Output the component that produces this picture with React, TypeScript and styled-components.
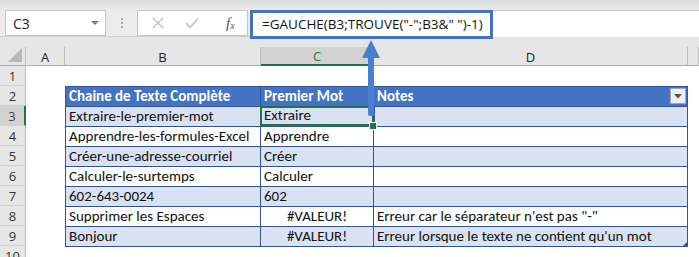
import React from 'react';
import styled, { createGlobalStyle } from 'styled-components';

const GlobalStyle = createGlobalStyle`
  html, body { margin: 0; padding: 0; background: #fff; }
  body { width: 699px; height: 257px; overflow: hidden; font-family: "Open Sans", "Noto Sans", sans-serif; }
`;

const columns = [
  { key: 'A', width: 39 },
  { key: 'B', width: 196 },
  { key: 'C', width: 113, selected: true },
  { key: 'D', width: 314 },
  { key: 'E', width: 11 },
];

const rows = [
  { b: 'Extraire-le-premier-mot', c: 'Extraire', d: '' },
  { b: 'Apprendre-les-formules-Excel', c: 'Apprendre', d: '' },
  { b: 'Créer-une-adresse-courriel', c: 'Créer', d: '' },
  { b: 'Calculer-le-surtemps', c: 'Calculer', d: '' },
  { b: '602-643-0024', c: '602', d: '' },
  { b: 'Supprimer les Espaces', c: '#VALEUR!', d: 'Erreur car le séparateur n\'est pas "-"', err: true },
  { b: 'Bonjour', c: '#VALEUR!', d: "Erreur lorsque le texte ne contient qu'un mot", err: true },
];

const App: React.FC = () => {
  return (
    <Page>
      <GlobalStyle />
      <TopBand>
        <FormulaRow>
          <NameBox>
            C3
            <Caret />
          </NameBox>
          <Grip>
            <i />
            <i />
            <i />
          </Grip>
          <FxBox>
            <FxIcon>
              <svg width="12" height="12" viewBox="0 0 12 12">
                <path d="M1 1 L11 11 M11 1 L1 11" stroke="#c4c4c4" strokeWidth="1.5" fill="none" />
              </svg>
            </FxIcon>
            <FxIcon>
              <svg width="14" height="12" viewBox="0 0 14 12">
                <path d="M1 6 L5 10.5 L13 1.5" stroke="#c4c4c4" strokeWidth="1.8" fill="none" />
              </svg>
            </FxIcon>
            <FxLabel>
              f<sub>x</sub>
            </FxLabel>
          </FxBox>
          <FormulaInput>
            <FormulaHighlight>=GAUCHE(B3;TROUVE("-";B3&amp;" ")-1)</FormulaHighlight>
          </FormulaInput>
        </FormulaRow>
      </TopBand>
      <HeaderGap />
      <Sheet>
        <Corner>
          <svg width="14" height="14" viewBox="0 0 14 14">
            <path d="M14 0 L14 14 L0 14 Z" fill="#b9b9b9" />
          </svg>
        </Corner>
        {columns.map((c) => (
          <ColHead key={c.key} $w={c.width} $sel={!!c.selected}>
            {c.key === 'E' ? '' : c.key}
          </ColHead>
        ))}
        {Array.from({ length: 10 }).map((_, i) => (
          <RowHead key={i} $row={i + 2} $sel={i === 2}>
            {i + 1}
          </RowHead>
        ))}
        <Table>
          <HeadCell>Chaine de Texte Complète</HeadCell>
          <HeadCell>Premier Mot</HeadCell>
          <HeadCell>
            Notes
            <FilterBtn>
              <svg width="8" height="5" viewBox="0 0 8 5">
                <path d="M0 0 L8 0 L4 4.5 Z" fill="#555" />
              </svg>
            </FilterBtn>
          </HeadCell>
          {rows.map((r, i) => (
            <React.Fragment key={i}>
              <Cell $band={i % 2 === 0}>{r.b}</Cell>
              <Cell $band={i % 2 === 0} $center={!!r.err} $active={i === 0}>
                {r.c}
                {i === 0 && <FillHandle />}
              </Cell>
              <Cell $band={i % 2 === 0}>
                {r.d}
                {i === rows.length - 1 && <ResizeMark />}
              </Cell>
            </React.Fragment>
          ))}
        </Table>
      </Sheet>
      <Arrow width="20" height="80" viewBox="0 0 20 80">
        <path d="M9 0 L18 18 L12 18 L12 74 Q12 76 10 76 L8 76 Q6 76 6 74 L6 18 L0 18 Z" fill="#4a7ed2" />
      </Arrow>
    </Page>
  );
};

//styles
const Page = styled.div`
  position: relative;
  width: 699px;
  height: 257px;
  overflow: hidden;
  background: #fff;
`;

const TopBand = styled.div`
  height: 37px;
  background: linear-gradient(#d8d8d8 0px, #e6e6e6 6px, #ececec 10px, #ececec 100%);
  box-sizing: border-box;
  border-bottom: 1px solid #cfcfcf;
`;

const FormulaRow = styled.div`
  display: flex;
  align-items: flex-start;
  padding-top: 10px;
  height: 27px;
  box-sizing: border-box;
`;

const NameBox = styled.div`
  margin-left: 5px;
  width: 101px;
  height: 26px;
  box-sizing: border-box;
  background: #fff;
  border: 1px solid #c6c6c6;
  display: flex;
  align-items: center;
  justify-content: space-between;
  padding: 0 6px 0 7px;
  font-size: 14px;
  color: #222;
`;

const Caret = styled.span`
  width: 0;
  height: 0;
  border-left: 4px solid transparent;
  border-right: 4px solid transparent;
  border-top: 4px solid #7a7a7a;
`;

const Grip = styled.div`
  width: 31px;
  height: 26px;
  display: flex;
  flex-direction: column;
  align-items: center;
  justify-content: center;
  gap: 2px;
  > i {
    display: block;
    width: 2px;
    height: 2px;
    background: #a8a8a8;
  }
`;

const FxBox = styled.div`
  width: 111px;
  height: 26px;
  box-sizing: border-box;
  background: #fff;
  border: 1px solid #c6c6c6;
  display: flex;
  align-items: center;
  padding-left: 13px;
  gap: 20px;
`;

const FxIcon = styled.span`
  display: flex;
  width: 14px;
  justify-content: center;
`;

const FxLabel = styled.span`
  margin-left: 7px;
  font-family: "Liberation Serif", serif;
  font-style: italic;
  font-size: 15px;
  color: #555;
  sub {
    font-size: 10px;
    vertical-align: -1px;
  }
`;

const FormulaInput = styled.div`
  flex: 1;
  height: 27px;
  background: #fff;
  border-top: 1px solid #c6c6c6;
  margin-left: 2px;
  display: flex;
  box-sizing: border-box;
  position: relative;
  z-index: 2;
`;

const FormulaHighlight = styled.div`
  margin-top: -1px;
  width: 243px;
  height: 29px;
  box-sizing: border-box;
  border: 3px solid #4472c4;
  padding-left: 9px;
  font-size: 13.5px;
  line-height: 23px;
  color: #111;
  white-space: nowrap;
  background: #fff;
`;

const HeaderGap = styled.div`
  height: 10px;
  background: #e6e6e6;
`;

const Sheet = styled.div`
  display: grid;
  grid-template-columns: 26px 39px 196px 113px 314px 11px;
  grid-template-rows: 19px repeat(10, 20px);
  background: #fff;
`;

const Corner = styled.div`
  background: #e6e6e6;
  border-right: 1px solid #bdbdbd;
  border-bottom: 1px solid #ababab;
  box-sizing: border-box;
  display: flex;
  align-items: flex-end;
  justify-content: flex-end;
  padding: 0 3px 3px 0;
`;

const ColHead = styled.div<{ $w: number; $sel: boolean }>`
  background: ${(p) => (p.$sel ? '#d2d2d2' : '#e6e6e6')};
  border-right: 1px solid #bdbdbd;
  border-bottom: ${(p) => (p.$sel ? '2px solid #217346' : '1px solid #ababab')};
  box-sizing: border-box;
  display: flex;
  align-items: center;
  justify-content: center;
  font-size: 13px;
  color: ${(p) => (p.$sel ? '#217346' : '#222')};
  padding-top: 1px;
`;

const RowHead = styled.div<{ $row: number; $sel: boolean }>`
  grid-column: 1;
  grid-row: ${(p) => p.$row};
  background: ${(p) => (p.$sel ? '#d2d2d2' : '#e6e6e6')};
  border-right: ${(p) => (p.$sel ? '2px solid #217346' : '1px solid #bdbdbd')};
  border-bottom: 1px solid #d0d0d0;
  box-sizing: border-box;
  display: flex;
  align-items: center;
  justify-content: center;
  font-size: 13px;
  color: ${(p) => (p.$sel ? '#444' : '#333')};
`;

const Table = styled.div`
  grid-column: 3 / 6;
  grid-row: 3 / 12;
  align-self: start;
  display: grid;
  grid-template-columns: 195px 113px 314px;
  grid-auto-rows: 20px;
  width: 623px;
  box-sizing: border-box;
  border-left: 1px solid #2f5597;
  border-top: 1px solid #2f5597;
  font-family: "Carlito", "Lato", sans-serif;
  font-size: 15px;
  position: relative;
`;

const HeadCell = styled.div`
  position: relative;
  background: #4472c4;
  color: #fff;
  font-weight: bold;
  padding-left: 3px;
  line-height: 19px;
  border-right: 1px solid #2f5597;
  border-bottom: 1px solid #2f5597;
  white-space: nowrap;
`;

const FilterBtn = styled.span`
  position: absolute;
  right: 1px;
  top: 1px;
  width: 16px;
  height: 16px;
  box-sizing: border-box;
  background: #efefef;
  border: 1px solid #a6a6a6;
  display: flex;
  align-items: center;
  justify-content: center;
`;

const Cell = styled.div<{ $band: boolean; $center?: boolean; $active?: boolean }>`
  position: relative;
  background: ${(p) => (p.$band ? '#d9e1f2' : '#fff')};
  color: #111;
  padding: 0 3px;
  line-height: 19px;
  text-align: ${(p) => (p.$center ? 'center' : 'left')};
  border-right: 1px solid #2f5597;
  border-bottom: 1px solid #2f5597;
  white-space: nowrap;
  ${(p) =>
    p.$active &&
    `
    box-shadow: inset 0 0 0 2px #217346;
    margin: -1px -1px 0 -1px;
    padding-left: 4px;
    z-index: 1;
  `}
`;

const FillHandle = styled.span`
  position: absolute;
  right: -3px;
  bottom: -4px;
  width: 6px;
  height: 6px;
  background: #217346;
  border: 1px solid #fff;
`;

const ResizeMark = styled.span`
  position: absolute;
  right: 0;
  bottom: 0;
  width: 0;
  height: 0;
  border-left: 4px solid transparent;
  border-bottom: 4px solid #2f5597;
`;

const Arrow = styled.svg`
  position: absolute;
  left: 362px;
  top: 40px;
  z-index: 3;
`;

export default App;
